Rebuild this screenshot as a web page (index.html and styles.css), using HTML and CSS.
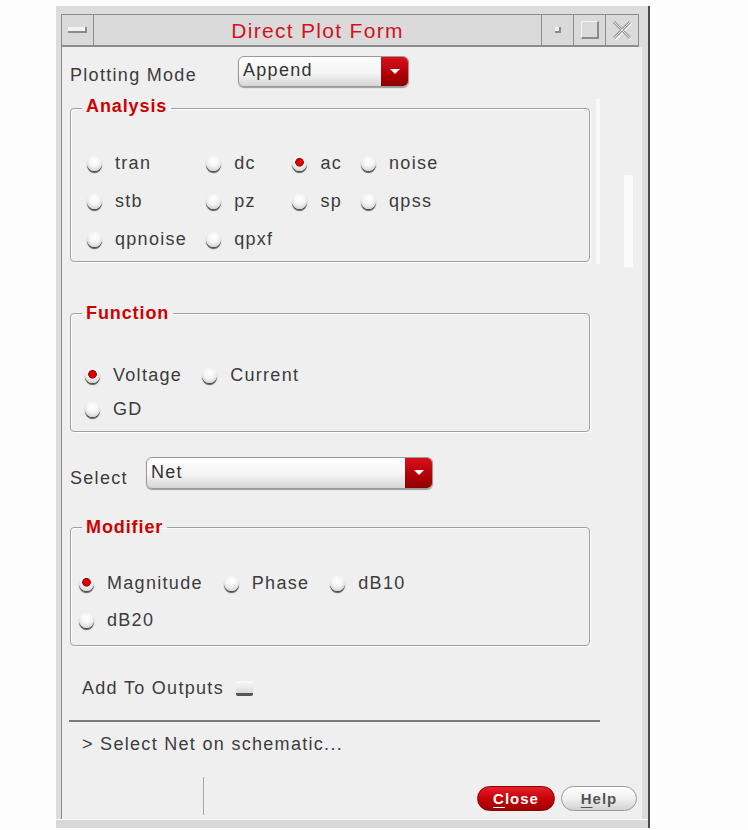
FILE: index.html
```html
<!doctype html>
<html lang="en">
    <head>
        <title>Direct Plot Form</title>
        <meta charset="UTF-8"/>
        <link rel="stylesheet" href="styles.css">
    </head>
    <body>
        <div class="window">
            <div class="titlebar">
                <div class="tb-button menu-button"><span class="menu-bar"></span></div>
                <div class="title">Direct Plot Form</div>
                <div class="tb-button"><span class="min-box"></span></div>
                <div class="tb-button"><span class="max-box"></span></div>
                <div class="tb-button close-x">
                    <svg width="22" height="22" viewBox="0 0 22 22">
                        <path d="M3 3 L19 19 M19 3 L3 19" stroke="#ffffff" stroke-width="3" transform="translate(1 1)"/>
                        <path d="M3 3 L19 19 M19 3 L3 19" stroke="#9a9a9a" stroke-width="3"/>
                        <path d="M3 3 L19 19 M19 3 L3 19" stroke="#e4e4e4" stroke-width="1"/>
                    </svg>
                </div>
            </div>

            <div class="panel">
                <span class="scroll-track"></span>
                <span class="scroll-thumb"></span>

                <div class="field-row">
                    <span class="field-label mode-label">Plotting Mode</span>
                    <div class="combo mode-combo">
                        <span class="combo-text">Append</span>
                        <span class="combo-arrow"></span>
                    </div>
                </div>

                <fieldset class="group analysis">
                    <legend>Analysis</legend>
                    <div class="choices">
                        <label class="choice"><span class="radio"></span>tran</label>
                        <label class="choice"><span class="radio"></span>dc</label>
                        <label class="choice"><span class="radio checked"></span>ac</label>
                        <label class="choice"><span class="radio"></span>noise</label>
                        <label class="choice"><span class="radio"></span>stb</label>
                        <label class="choice"><span class="radio"></span>pz</label>
                        <label class="choice"><span class="radio"></span>sp</label>
                        <label class="choice"><span class="radio"></span>qpss</label>
                        <label class="choice"><span class="radio"></span>qpnoise</label>
                        <label class="choice"><span class="radio"></span>qpxf</label>
                    </div>
                </fieldset>

                <fieldset class="group function">
                    <legend>Function</legend>
                    <div class="choices">
                        <label class="choice"><span class="radio checked"></span>Voltage</label>
                        <label class="choice"><span class="radio"></span>Current</label>
                        <label class="choice"><span class="radio"></span>GD</label>
                    </div>
                </fieldset>

                <div class="field-row select-row">
                    <span class="field-label select-label">Select</span>
                    <div class="combo select-combo">
                        <span class="combo-text">Net</span>
                        <span class="combo-arrow"></span>
                    </div>
                </div>

                <fieldset class="group modifier">
                    <legend>Modifier</legend>
                    <div class="choices">
                        <label class="choice"><span class="radio checked"></span>Magnitude</label>
                        <label class="choice"><span class="radio"></span>Phase</label>
                        <label class="choice"><span class="radio"></span>dB10</label>
                        <label class="choice"><span class="radio"></span>dB20</label>
                    </div>
                </fieldset>

                <div class="outputs-row">Add To Outputs <span class="checkbox"></span></div>

                <div class="separator"></div>

                <div class="prompt">&gt; Select Net on schematic...</div>

                <div class="button-row">
                    <div class="status-cell"></div>
                    <div class="spacer"></div>
                    <button class="pill close-button"><u>C</u>lose</button>
                    <button class="pill help-button"><u>H</u>elp</button>
                </div>
            </div>
            <div class="bottom-band"></div>
        </div>
    </body>
</html>
```

FILE: styles.css
```css
body {
    margin: 0;
    background-color: #fdfdfd;
    font-family: "Liberation Sans", Arial, sans-serif;
    font-size: 18px;
    letter-spacing: 1.3px;
    color: #3c3c3c;
}
.window {
    width: 592px;
    margin: 6px 0 0 56px;
    padding-top: 8px;
    background-color: #dcdcdc;
    border-right: 2px solid #4a4a4a;
}
.titlebar {
    display: flex;
    height: 30px;
    margin: 0 9px 0 5px;
    border-top: 1px solid #8c8c8c;
    border-bottom: 2px solid #8c8c8c;
    border-left: 1px solid #8c8c8c;
    border-right: 1px solid #8c8c8c;
    background-color: #dadada;
}
.tb-button {
    display: flex;
    align-items: center;
    justify-content: center;
    width: 31px;
    border-left: 1px solid #8c8c8c;
}
.menu-button {
    border-left: 0;
    border-right: 1px solid #8c8c8c;
}
.menu-bar {
    width: 17px;
    height: 4px;
    background-color: #f2f2f2;
    border-right: 2px solid #8a8a8a;
    border-bottom: 2px solid #8a8a8a;
}
.min-box {
    width: 4px;
    height: 4px;
    background-color: #f4f4f4;
    border-right: 2px solid #8a8a8a;
    border-bottom: 2px solid #8a8a8a;
}
.max-box {
    width: 15px;
    height: 15px;
    border: 1px solid #f4f4f4;
    border-right: 2px solid #8a8a8a;
    border-bottom: 2px solid #8a8a8a;
}
.close-x {
    width: 32px;
}
.title {
    flex-grow: 1;
    text-align: center;
    font-size: 21px;
    line-height: 32px;
    color: #d4121e;
}
.panel {
    position: relative;
    height: 772px;
    box-sizing: border-box;
    margin: 0 6px 0 5px;
    padding-left: 8px;
    background-color: #efefef;
    border-left: 1px solid #8c8c8c;
    overflow: hidden;
}
.scroll-track {
    position: absolute;
    left: 534px;
    top: 52px;
    width: 4px;
    height: 165px;
    background-color: #f8f8f8;
}
.scroll-thumb {
    position: absolute;
    left: 562px;
    top: 128px;
    width: 9px;
    height: 92px;
    background-color: #fbfbfb;
}
.field-row {
    display: flex;
    align-items: center;
    margin-top: 9px;
}
.field-label {
    flex-shrink: 0;
    padding-top: 8px;
}
.mode-label {
    width: 168px;
}
.select-label {
    width: 76px;
    padding-top: 11px;
}
.select-row {
    margin-top: 25px;
}
.combo {
    display: flex;
    height: 31px;
    box-sizing: border-box;
    border: 1px solid #9a9a9a;
    border-radius: 6px;
    background: linear-gradient(to bottom, #ffffff, #f4f4f4 55%, #d6d6d6);
    box-shadow: 0 1px 1px rgba(0, 0, 0, 0.35);
    overflow: hidden;
}
.mode-combo {
    width: 171px;
}
.select-combo {
    width: 287px;
    height: 32px;
}
.combo-text {
    display: flex;
    align-items: center;
    flex-grow: 1;
    padding: 0 0 2px 4px;
    color: #333333;
}
.combo-arrow {
    position: relative;
    width: 27px;
    background: linear-gradient(to bottom, #d8101a, #b00008 60%, #8c0000);
}
.combo-arrow::after {
    content: "";
    position: absolute;
    left: 9px;
    top: 12px;
    border-left: 5px solid transparent;
    border-right: 5px solid transparent;
    border-top: 5px solid #ffffff;
}
.group {
    width: 520px;
    box-sizing: border-box;
    margin: 0;
    padding: 0;
    border: 1px solid #a0a0a0;
    border-radius: 4px;
    box-shadow: 1px 1px 0 #ffffff, inset 1px 1px 0 #fbfbfb;
}
.group legend {
    margin-left: 11px;
    padding: 0 4px;
    font-weight: bold;
    font-size: 18px;
    line-height: 18px;
    letter-spacing: 0.9px;
    color: #d00000;
}
.choices {
    display: grid;
    justify-content: start;
}
.choice {
    display: flex;
    align-items: center;
}
.radio {
    flex-shrink: 0;
    width: 15px;
    height: 15px;
    margin-right: 13px;
    border-radius: 50%;
    background: radial-gradient(circle at 50% 35%, #ffffff 0, #f6f6f6 40%, #d4d4d4 80%);
    box-shadow: 0 2px 1px #505050;
}
.radio.checked {
    background: radial-gradient(circle at 50% 42%, #ee0000 0, #d00000 3px, #a00000 4px, transparent 4.6px),
        radial-gradient(circle at 50% 35%, #ffffff 0, #f6f6f6 40%, #d4d4d4 80%);
}
.analysis {
    margin-top: 10px;
}
.analysis legend {
    padding-bottom: 4px;
}
.analysis .choices {
    grid-template-columns: repeat(4, auto);
    grid-auto-rows: 38px;
    column-gap: 19px;
    padding: 25px 0 3px 16px;
}
.function {
    margin-top: 42px;
}
.function .choices {
    grid-template-columns: repeat(2, auto);
    grid-auto-rows: 34px;
    column-gap: 20px;
    padding: 36px 0 5px 14px;
}
.modifier {
    margin-top: 29px;
}
.modifier .choices {
    grid-template-columns: repeat(3, auto);
    grid-auto-rows: 37px;
    column-gap: 21px;
    padding: 29px 0 6px 8px;
}
.outputs-row {
    display: flex;
    align-items: center;
    height: 24px;
    margin-top: 30px;
    padding-left: 12px;
}
.checkbox {
    width: 17px;
    height: 12px;
    margin-left: 12px;
    border-radius: 2px;
    background: linear-gradient(to bottom, #fafafa, #dadada);
    border-bottom: 3px solid #555555;
}
.separator {
    width: 531px;
    height: 2px;
    margin-top: 20px;
    margin-left: -1px;
    background-color: #7a7a7a;
}
.prompt {
    height: 24px;
    line-height: 24px;
    margin-top: 10px;
    padding-left: 12px;
}
.button-row {
    display: flex;
    align-items: flex-end;
    height: 38px;
    margin-top: 21px;
    padding-right: 5px;
}
.status-cell {
    width: 133px;
    height: 38px;
    border-right: 1px solid #a8a8a8;
}
.spacer {
    flex-grow: 1;
}
.pill {
    width: 78px;
    height: 25px;
    margin: 0 0 4px 6px;
    padding: 0;
    border-radius: 13px;
    font-family: "Liberation Sans", Arial, sans-serif;
    font-size: 15px;
    font-weight: bold;
    letter-spacing: 1px;
    cursor: pointer;
}
.pill u {
    text-underline-offset: 3px;
}
.close-button {
    color: #ffffff;
    border: 1px solid #8c0000;
    background: linear-gradient(to bottom, #e8202a, #c80008 50%, #9c0000);
}
.help-button {
    width: 76px;
    color: #555555;
    border: 1px solid #9a9a9a;
    background: linear-gradient(to bottom, #ffffff, #f0f0f0 50%, #d2d2d2);
}
.bottom-band {
    height: 8px;
    margin-left: 0;
    background-color: #d8d8d8;
    border-top: 1px solid #fafafa;
}
```
